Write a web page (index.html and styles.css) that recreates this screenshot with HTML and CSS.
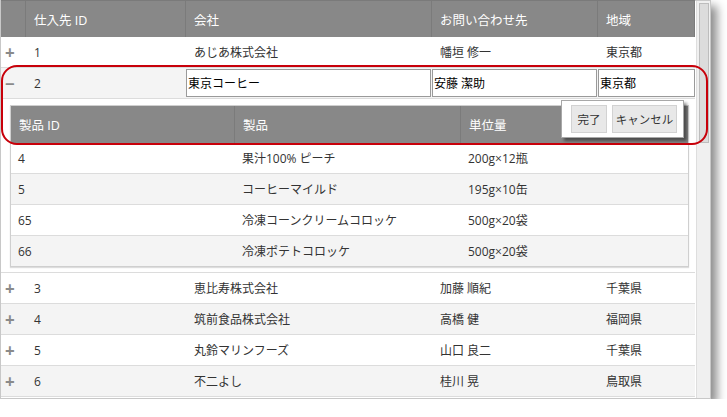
FILE: index.html
```html
<!DOCTYPE html>
<html lang="ja">
<head>
<meta charset="utf-8">
<link rel="stylesheet" href="styles.css">
</head>
<body>
<div class="window">
  <div class="grid">
    <div class="row head">
      <div class="cell"></div>
      <div class="cell">仕入先 ID</div>
      <div class="cell">会社</div>
      <div class="cell">お問い合わせ先</div>
      <div class="cell">地域</div>
    </div>
    <div class="row">
      <div class="cell exp">+</div>
      <div class="cell">1</div>
      <div class="cell">あじあ株式会社</div>
      <div class="cell">幡垣 修一</div>
      <div class="cell">東京都</div>
    </div>
    <div class="row alt edit">
      <div class="cell exp">−</div>
      <div class="cell">2</div>
      <div class="cell inp"><span class="box">東京コーヒー</span></div>
      <div class="cell inp"><span class="box">安藤 潔助</span></div>
      <div class="cell inp"><span class="box">東京都</span></div>
    </div>
    <div class="childwrap">
      <div class="child">
        <div class="crow chead">
          <div class="ccell">製品 ID</div>
          <div class="ccell">製品</div>
          <div class="ccell">単位量</div>
        </div>
        <div class="crow">
          <div class="ccell">4</div>
          <div class="ccell">果汁100% ピーチ</div>
          <div class="ccell">200g×12瓶</div>
        </div>
        <div class="crow alt">
          <div class="ccell">5</div>
          <div class="ccell">コーヒーマイルド</div>
          <div class="ccell">195g×10缶</div>
        </div>
        <div class="crow">
          <div class="ccell">65</div>
          <div class="ccell">冷凍コーンクリームコロッケ</div>
          <div class="ccell">500g×20袋</div>
        </div>
        <div class="crow alt">
          <div class="ccell">66</div>
          <div class="ccell">冷凍ポテトコロッケ</div>
          <div class="ccell">500g×20袋</div>
        </div>
      </div>
    </div>
    <div class="row">
      <div class="cell exp">+</div>
      <div class="cell">3</div>
      <div class="cell">恵比寿株式会社</div>
      <div class="cell">加藤 順紀</div>
      <div class="cell">千葉県</div>
    </div>
    <div class="row alt">
      <div class="cell exp">+</div>
      <div class="cell">4</div>
      <div class="cell">筑前食品株式会社</div>
      <div class="cell">高橋 健</div>
      <div class="cell">福岡県</div>
    </div>
    <div class="row">
      <div class="cell exp">+</div>
      <div class="cell">5</div>
      <div class="cell">丸鈴マリンフーズ</div>
      <div class="cell">山口 良二</div>
      <div class="cell">千葉県</div>
    </div>
    <div class="row alt">
      <div class="cell exp">+</div>
      <div class="cell">6</div>
      <div class="cell">不二よし</div>
      <div class="cell">桂川 晃</div>
      <div class="cell">鳥取県</div>
    </div>
  </div>
  <div class="scrollbar"><div class="thumb"></div></div>
  <div class="annot"></div>
  <div class="popup">
    <button class="btn done">完了</button>
    <button class="btn cancel">キャンセル</button>
  </div>
</div>
</body>
</html>
```

FILE: styles.css
```css
* { box-sizing: border-box; }
html, body { margin: 0; padding: 0; background: #fff; }
body {
  font-family: "Open Sans", "Noto Sans CJK JP", sans-serif;
  font-size: 12px;
  color: #333;
}
.window {
  position: relative;
  display: flex;
  width: 711px;
  height: 399px;
  border: 1px solid #c8c8c8;
  background: #fff;
  box-shadow: 6px 6px 9px rgba(0, 0, 0, 0.45);
}
.grid {
  width: 694px;
  display: flex;
  flex-direction: column;
}
.row {
  display: grid;
  grid-template-columns: 25px 160px 246px 166px 97px;
  height: 31px;
  border-bottom: 1px solid #dcdcdc;
  background: #fff;
}
.row.alt { background: #f4f4f4; }
.cell {
  display: flex;
  align-items: center;
  padding-left: 8px;
  white-space: nowrap;
  overflow: hidden;
}
.row.head {
  height: 37px;
  background: #888888;
  border-bottom: none;
  border-top: 1px solid #7a7a7a;
  margin-top: -1px;
}
.row.head .cell {
  color: #fff;
  border-right: 1px solid #7b7b7b;
  font-size: 12.5px;
}
.cell.exp {
  padding-left: 4px;
  color: #8a8a8a;
  font-size: 17px;
  font-weight: bold;
}
.edit .cell.inp {
  padding: 0;
  align-items: stretch;
}
.edit .box {
  display: flex;
  align-items: center;
  width: 100%;
  margin: 1px 1px 1px 0;
  padding-left: 1px;
  background: #fff;
  border: 1px solid #9a9a9a;
  color: #000;
}
.edit .cell.inp:last-child .box { margin-right: 0; }
.childwrap {
  height: 174px;
  padding: 6px 6px 0 9px;
  border-bottom: 1px solid #dcdcdc;
  background: #fff;
}
.child {
  border: 1px solid #cfcfcf;
  box-shadow: 0 1px 1px #ddd;
}
.crow {
  display: grid;
  grid-template-columns: 224px 226px 1fr;
  height: 31px;
  border-bottom: 1px solid #dcdcdc;
  background: #fff;
}
.crow:last-child { border-bottom: none; height: 30px; }
.crow.alt { background: #f4f4f4; }
.ccell {
  display: flex;
  align-items: center;
  padding-left: 7px;
  white-space: nowrap;
}
.crow.chead {
  height: 37px;
  background: #888888;
  border-bottom: none;
}
.crow.chead .ccell {
  color: #fff;
  padding-left: 8px;
  border-right: 1px solid #7b7b7b;
  font-size: 12.5px;
}
.crow.chead .ccell:last-child { border-right: none; }
.scrollbar {
  width: 15px;
  margin-left: 1px;
  background: #f0f0f0;
  border-left: 1px solid #dedede;
  padding: 2px 1px 0 2px;
}
.thumb {
  height: 140px;
  background: #dcdcdc;
  border: 1px solid #bdbdbd;
}
.annot {
  position: absolute;
  left: 0;
  top: 64px;
  width: 707px;
  height: 80px;
  border: 2px solid #c8000a;
  border-radius: 16px;
  pointer-events: none;
}
.popup {
  position: absolute;
  left: 560px;
  top: 99px;
  width: 123px;
  height: 38px;
  display: flex;
  align-items: center;
  gap: 5px;
  padding-left: 9px;
  background: #fff;
  border: 1px solid #a8a8a8;
  box-shadow: 3px 3px 3px rgba(0, 0, 0, 0.45);
}
.btn {
  flex: none;
  height: 28px;
  padding: 0;
  white-space: nowrap;
  font-family: "Open Sans", "Noto Sans CJK JP", sans-serif;
  font-size: 11.5px;
  color: #333;
  background: #e8e8e8;
  border: 1px solid #d2d2d2;
  border-radius: 0;
}
.btn.done { width: 36px; }
.btn.cancel { width: 65px; }
```
